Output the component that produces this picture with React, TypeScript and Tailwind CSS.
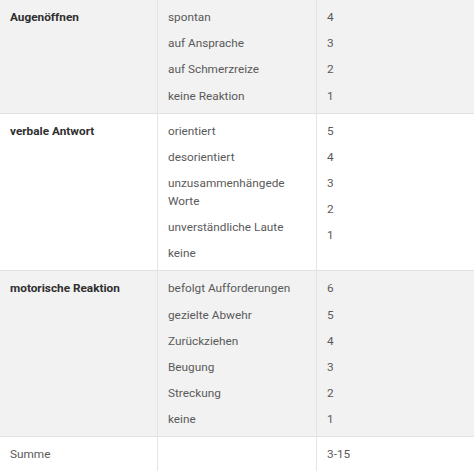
const rows = [
  {
    label: "Augenöffnen",
    bold: true,
    items: ["spontan", "auf Ansprache", "auf Schmerzreize", "keine Reaktion"],
    scores: ["4", "3", "2", "1"],
    shaded: true,
  },
  {
    label: "verbale Antwort",
    bold: true,
    items: ["orientiert", "desorientiert", "unzusammenhängede Worte", "unverständliche Laute", "keine"],
    scores: ["5", "4", "3", "2", "1"],
    shaded: false,
  },
  {
    label: "motorische Reaktion",
    bold: true,
    items: ["befolgt Aufforderungen", "gezielte Abwehr", "Zurückziehen", "Beugung", "Streckung", "keine"],
    scores: ["6", "5", "4", "3", "2", "1"],
    shaded: true,
  },
  {
    label: "Summe",
    bold: false,
    items: [],
    scores: ["3-15"],
    shaded: false,
  },
]

function Cell({ children, last }: { children: React.ReactNode; last?: boolean }) {
  return (
    <div className={`flex flex-col gap-[8.2px] px-[10px] py-2 ${last ? "" : "border-r border-[#e4e4e4]"}`}>
      {children}
    </div>
  )
}

export default function App() {
  return (
    <div
      className="w-[474px] h-[471px] overflow-hidden bg-white text-[11.8px] leading-[18px] text-[#5a5a5a]"
      style={{ fontFamily: "Roboto, 'Liberation Sans', sans-serif" }}
    >
      {rows.map((row, i) => (
        <div
          key={row.label}
          className={`grid grid-cols-[158px_159px_1fr] ${row.shaded ? "bg-[#f2f2f2]" : "bg-white"} ${
            i < rows.length - 1 ? "border-b border-[#e2e2e2]" : ""
          }`}
        >
          <Cell>
            <span className={row.bold ? "font-bold text-[#2f2f2f]" : ""}>{row.label}</span>
          </Cell>
          <Cell>
            {row.items.map((item) => (
              <span key={item}>{item}</span>
            ))}
          </Cell>
          <Cell last>
            {row.scores.map((s) => (
              <span key={s}>{s}</span>
            ))}
          </Cell>
        </div>
      ))}
    </div>
  )
}
